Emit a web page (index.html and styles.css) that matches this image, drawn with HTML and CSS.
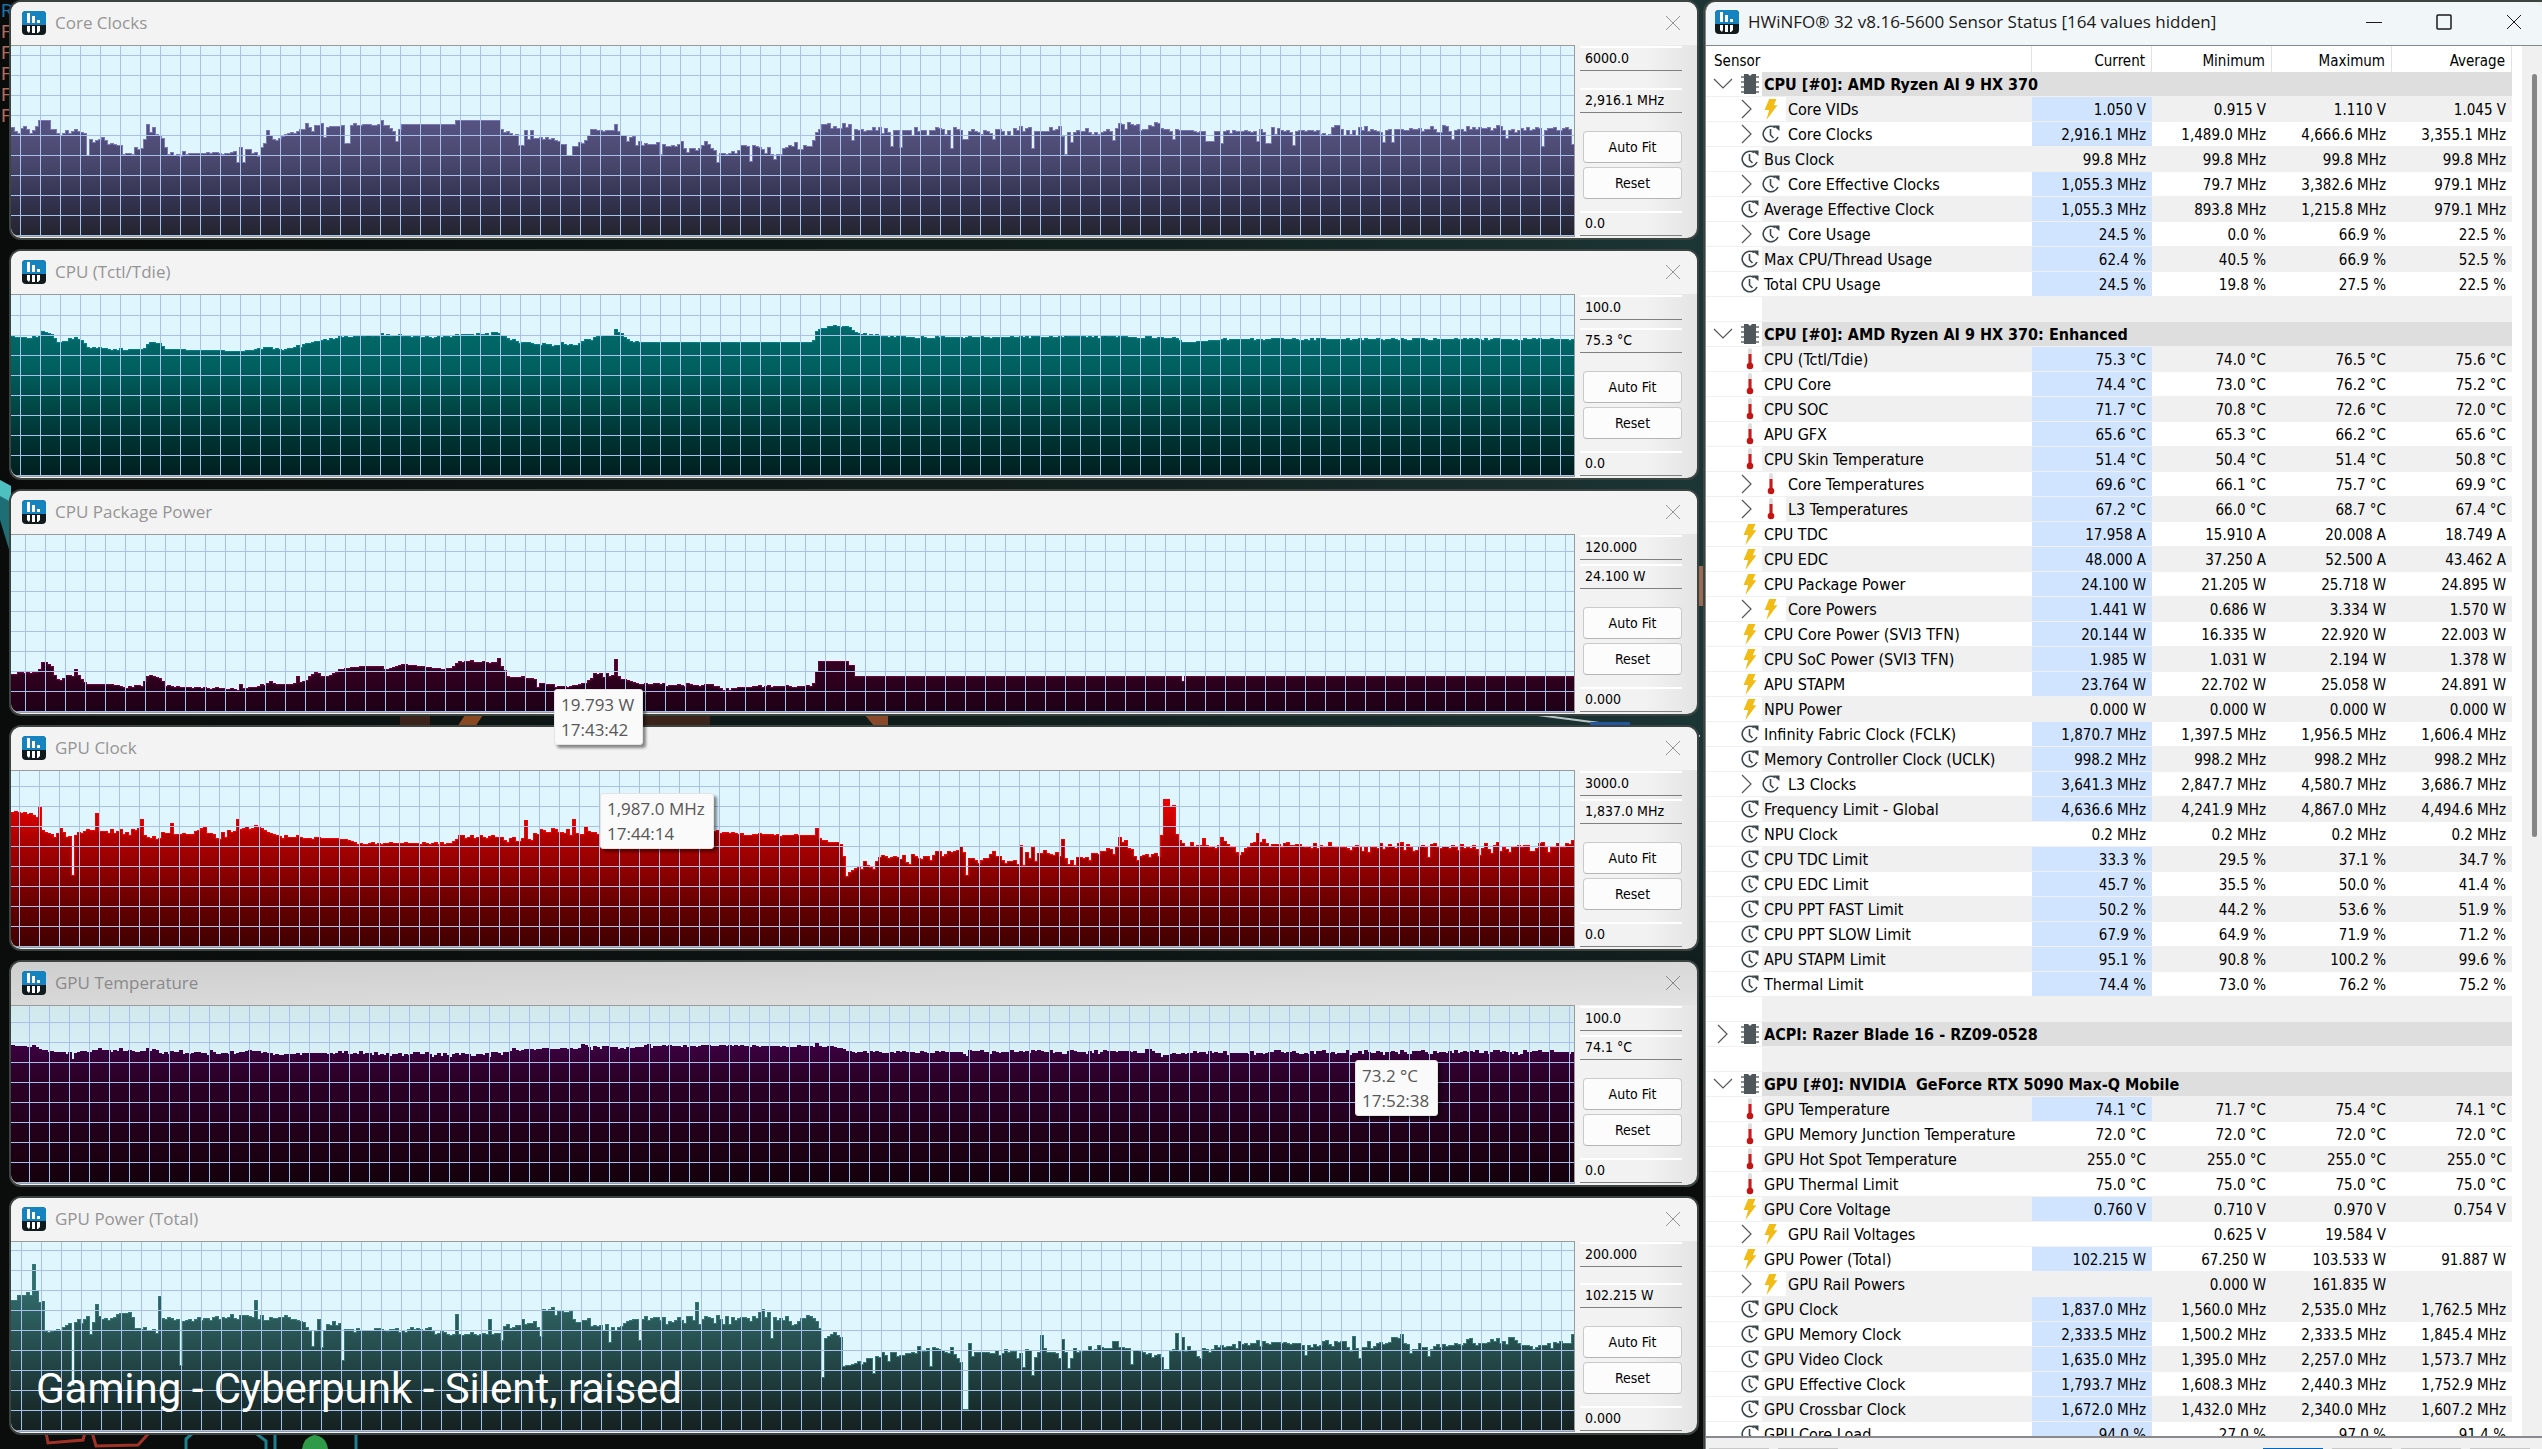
FILE: index.html
```
<!DOCTYPE html>
<html lang="en">
<head>
    <meta charset="UTF-8">
    <meta name="viewport" content="width=device-width, initial-scale=1.0">
    <title>HWiNFO Sensor Status</title>
    <link rel="stylesheet" href="styles.css">
</head>
<body>
    <!-- Shared icons -->
    <svg class="symbols" aria-hidden="true">
        <symbol id="logo" viewBox="0 0 24 24">
            <rect width="24" height="24" rx="4" fill="#10191c"/>
            <path d="M0 14V4a4 4 0 0 1 4-4h16a4 4 0 0 1 4 4v10z" fill="#1583c0"/>
            <path d="M5 2h3v10H5zM10 5h3v7h-3zM15 9h3v3h-3z" fill="#fff"/>
            <path d="M5 15h3v5l-1 2-2-2zM10 15h3v7h-3zM15 15h3v5l-2 2h-1z" fill="#fff"/>
        </symbol>
        <symbol id="cross" viewBox="0 0 16 16">
            <path d="M1 1l14 14M15 1L1 15" fill="none" stroke="currentColor"/>
        </symbol>
        <symbol id="minimize" viewBox="0 0 16 16">
            <path d="M0 8.5h16" stroke="currentColor"/>
        </symbol>
        <symbol id="maximize" viewBox="0 0 16 16">
            <rect x="1" y="1" width="14" height="14" rx="1" fill="none" stroke="currentColor" stroke-width="1.5"/>
        </symbol>
        <symbol id="open" viewBox="0 0 20 20">
            <path d="M1 5l9 9 9-9" fill="none" stroke="#555" stroke-width="1.2"/>
        </symbol>
        <symbol id="closed" viewBox="0 0 20 20">
            <path d="M5 1l9 9-9 9" fill="none" stroke="#555" stroke-width="1.2"/>
        </symbol>
        <symbol id="chip" viewBox="0 0 18 22">
            <path d="M0 4h18M0 9h18M0 14h18M0 19h18" stroke="#8a8f91" stroke-width="2"/>
            <path d="M3 1h4l2 2 2-2h4v20H3z" fill="#50575a"/>
        </symbol>
        <symbol id="bolt" viewBox="0 0 18 24">
            <path d="M7 1h8l-3 7h4L4 24l3-11H2z" fill="#f2bc16"/>
        </symbol>
        <symbol id="clock" viewBox="0 0 18 22">
            <path d="M13 4.500A7.700 7.700 0 1 0 16 14" fill="none" stroke="#3d484c" stroke-width="1.600"/>
            <path d="M11 2.500h6.500V8z" fill="#3d484c"/>
            <path d="M8.500 6v6l3 3" fill="none" stroke="#3d484c" stroke-width="1.600"/>
        </symbol>
        <symbol id="thermo" viewBox="0 0 10 22">
            <rect x="3" y="0" width="4" height="17" rx="2" fill="#dedede"/>
            <path d="M3.500 6h3v10h-3z" fill="#cc1a1a"/>
            <circle cx="5" cy="18" r="3.300" fill="#c51414"/>
        </symbol>
    </svg>

    <!-- Bits of the game that show around the windows -->
    <svg class="game" aria-hidden="true">
        <path d="M0 480l11 6v70L0 520z" fill="#1d6f75"/>
        <path d="M0 480l11 6v16L0 496z" fill="#4ec0c0"/>
        <path d="M1530 714l170 22" stroke="#b9c4c4" stroke-width="2"/>
        <path d="M465 715h18l-8 12h-18z" fill="#8a4820"/>
        <path d="M400 715h30v12h-30zM640 715h70v12h-70z" fill="#3c241c"/>
        <path d="M864 714h24v12h-14z" fill="#8a4a2a"/>
        <path d="M1590 722h40v4h-40z" fill="#2456a0"/>
        <path d="M1699 566h5v40h-5z" fill="#9a6a50"/>
        <path d="M46 1432l2 11 35-3 2-8M92 1432l4 14 42-1 12-13" fill="none" stroke="#a33226" stroke-width="3"/>
        <path d="M186 1449v-10l8-7M254 1432l12 9v8M275 1432v17M356 1432v17" fill="none" stroke="#1f7f8c" stroke-width="3"/>
        <path d="M302 1449q2-12 12-14 12 1 14 14z" fill="#2f9a48"/>
    </svg>
    <div class="log">
        <span class="log-head">R</span>
        <span>F</span>
        <span>F</span>
        <span>F</span>
        <span>F</span>
        <span>F</span>
    </div>

    <main class="desktop">
        <div class="graphs" id="graphs"></div>

        <section class="window sensors">
            <header class="titlebar">
                <svg class="logo"><use href="#logo"/></svg>
                <h1>HWiNFO® 32 v8.16-5600 Sensor Status [164 values hidden]</h1>
                <div class="caption-buttons">
                    <button aria-label="Minimize"><svg><use href="#minimize"/></svg></button>
                    <button aria-label="Maximize"><svg><use href="#maximize"/></svg></button>
                    <button aria-label="Close"><svg><use href="#cross"/></svg></button>
                </div>
            </header>
            <div class="sensor-body">
                <table>
                    <thead>
                        <tr>
                            <th class="name">Sensor</th>
                            <th>Current</th>
                            <th>Minimum</th>
                            <th>Maximum</th>
                            <th>Average</th>
                        </tr>
                    </thead>
                    <tbody id="rows"></tbody>
                </table>
                <div class="scrollbar"><div class="thumb"></div></div>
            </div>
            <footer class="toolbar">
                <span></span><span></span>
                <span class="primary"></span><span></span><span></span><span></span>
            </footer>
        </section>
    </main>

    <p class="caption">Gaming - Cyberpunk - Silent, raised</p>

    <script src="script.js"></script>
</body>
</html>
```
FILE: styles.css
```
* {
    box-sizing: border-box;
}

body {
    margin: 0;
    height: 100vh;
    overflow: hidden;
    position: relative;
    font-family: "DejaVu Sans Condensed", Tahoma, "Noto Sans", sans-serif;
    font-size: 15px;
    color: #000;
    background: linear-gradient(to bottom, transparent 55%, #0a0d0c 75%),
                linear-gradient(to right, #0a0c0b, #12211f 45%, #1d3838 70%, #173030);
}

h1, h2, p {
    margin: 0;
}

button {
    font: inherit;
    color: inherit;
    padding: 0;
}

.symbols {
    display: none;
}

.game {
    position: absolute;
    left: 0;
    top: 0;
    width: 100%;
    height: 100%;
}

.log {
    position: absolute;
    left: 1px;
    top: 0;
    display: flex;
    flex-direction: column;
    font-family: Roboto, sans-serif;
    font-size: 19px;
    line-height: 21px;
    color: #b26a5a;
}

.log-head {
    color: #1a72a8;
}

.desktop {
    position: relative;
    display: grid;
    grid-template-columns: 1686fr 837fr;
    gap: 8px;
    height: 100%;
    padding: 2px 0 0 11px;
}

.graphs {
    display: grid;
    grid-template-rows: 236fr 227fr 223fr 222fr 223fr 235fr;
    gap: 13px;
    padding-bottom: 16px;
    min-height: 0;
}

.window {
    position: relative;
    display: flex;
    flex-direction: column;
    min-width: 0;
    min-height: 0;
    background: #f0f0f0;
    border-radius: 10px;
    box-shadow: 0 0 0 2px #3c4442;
}

.titlebar {
    display: flex;
    align-items: center;
    gap: 9px;
    height: 43px;
    flex: none;
    padding: 0 16px 2px 11px;
    border-radius: 10px 10px 0 0;
    background: #f3f3f3;
    color: #959595;
}

.titlebar h1,
.titlebar h2 {
    flex: 1;
    font-family: "Open Sans", "Noto Sans", sans-serif;
    font-size: 17px;
    font-weight: normal;
    line-height: 24px;
}

.logo {
    width: 24px;
    height: 24px;
}

.titlebar button {
    width: 16px;
    height: 16px;
    border: 0;
    background: none;
}

.titlebar button svg {
    display: block;
    width: 16px;
    height: 16px;
}

/* Graph windows */
.graph {
    background: linear-gradient(to right, #f2f2f2 97%, #e4e4e4);
    padding-bottom: 1px;
}

.graph-gputemp .titlebar {
    background: linear-gradient(to bottom right, #cecece, #e2e2e2);
    color: #8a8a8a;
}

.graph-body {
    flex: 1;
    display: flex;
    gap: 5px;
    min-height: 0;
}

.plot {
    flex: 1;
    min-width: 0;
    border: 1px solid #9a9a9a;
    border-left: 0;
    border-radius: 0 0 0 9px;
    background: #dff6ff;
    overflow: hidden;
}

.graph-gputemp .plot {
    background: linear-gradient(to bottom, #d0e8ec, #dff6ff 50%);
}

.plot svg {
    display: block;
    width: 100%;
    height: 100%;
}

.controls {
    width: 117px;
    flex: none;
    display: flex;
    flex-direction: column;
    padding: 1px 15px 1px 0;
}

.readout {
    height: 25px;
    flex: none;
    padding-left: 5px;
    border-top: 2px solid #fff;
    border-bottom: 1px solid #808080;
    font-size: 14px;
    line-height: 20px;
    white-space: nowrap;
}

.readout.current {
    margin: auto 0 18px;
}

.controls button {
    height: 32px;
    flex: none;
    margin: 0 0 4px 3px;
    border: 1px solid #cacaca;
    border-bottom-color: #b5b5b5;
    border-radius: 4px;
    background: #fcfcfc;
    font-size: 14px;
}

.readout.low {
    margin-top: 8px;
}

.tip {
    position: absolute;
    z-index: 2;
    padding: 2px 8px 2px 6px;
    border: 1px solid #e4e4e4;
    border-radius: 3px;
    background: #fafafa;
    box-shadow: 3px 3px 3px rgba(0, 0, 0, .45);
    color: #575757;
    font-family: "Open Sans", "Noto Sans", sans-serif;
    font-size: 17px;
    line-height: 25px;
    white-space: nowrap;
}

.tip-power {
    left: 543px;
    top: 198px;
}

.tip-clock {
    left: 589px;
    top: 66px;
}

.tip-temp {
    left: 1344px;
    top: 98px;
}

/* Sensor window */
.sensors {
    border-radius: 10px 0 0 0;
    overflow: hidden;
    border-left: 1px solid #858585;
}

.sensors .titlebar {
    border-bottom: 1px solid #83888c;
    padding: 0 16px 3px 9px;
    height: 44px;
    color: #1a1a1a;
    background: #f1f6f8;
}

.caption-buttons {
    display: flex;
    gap: 54px;
    padding-right: 4px;
}

.sensor-body {
    flex: 1;
    display: flex;
    align-items: flex-start;
    min-height: 0;
    overflow: hidden;
    background: #fff;
}

table {
    flex: 1;
    table-layout: fixed;
    border-collapse: separate;
    border-spacing: 0;
    margin-right: 10px;
}

th {
    width: 120px;
    height: 26px;
    padding: 3px 6px 0 0;
    border-right: 1px solid #e2e2e2;
    font-weight: normal;
    line-height: 20px;
    text-align: right;
}

th.name {
    width: auto;
    padding-left: 8px;
    text-align: left;
}

td {
    height: 25px;
    padding: 2px 6px 0 0;
    border-bottom: 1px solid #f0f0f0;
    line-height: 20px;
    text-align: right;
    white-space: pre;
}

.name-cell {
    padding: 0;
    background: #fff;
    font-size: 16px;
    text-align: left;
}

.tree {
    display: flex;
    align-items: center;
    height: 24px;
}

.gutter {
    width: 35px;
    flex: none;
    padding-left: 6px;
}

.icon,
.twisty {
    display: flex;
    align-items: center;
    justify-content: center;
    width: 21px;
    height: 24px;
    flex: none;
    border: 0;
    background: none;
}

.icon {
    justify-content: flex-start;
}

/* Expandable rows: arrow hangs into the gutter */
.child .gutter {
    width: 31px;
}

.child .twisty {
    width: 25px;
    justify-content: flex-start;
}

.child .icon {
    width: 24px;
}

.icon svg {
    width: 18px;
    height: 22px;
}

.twisty svg {
    width: 20px;
    height: 20px;
}

.label {
    flex: 1;
    height: 24px;
    line-height: 26px;
    padding-left: 2px;
    min-width: 0;
}

.alt td:not(.name-cell),
.alt .label {
    background: #f0f0f0;
}

.row td.live {
    background: #d0e4ff;
}

.group td:not(.name-cell),
.group .label {
    background: #dedede;
    font-weight: bold;
}

.scrollbar {
    width: 20px;
    height: 100%;
    padding: 28px 5px 0 10px;
    background: #f0f0f0;
}

.thumb {
    height: 56%;
    border-radius: 3px;
    background: #868686;
}

.toolbar {
    height: 13px;
    flex: none;
    display: flex;
    gap: 9px;
    padding: 10px 12px 0 3px;
    border-top: 2px solid #8a8a8e;
    background: #f0f0f0;
}

.toolbar span {
    width: 60px;
    background: #c8c8c8;
}

.toolbar .primary {
    margin-left: auto;
    background: #0067c0;
}

.caption {
    position: absolute;
    left: 36px;
    bottom: 24px;
    font-family: Roboto, "Liberation Sans", sans-serif;
    font-size: 42px;
    line-height: 72px;
    color: #fff;
}
```
FILE: script.js
```
// Each graph: levels are [x, height, noise] joined by straight runs,
// spikes are [x, width, height] drawn over them. Heights are measured from the bottom.
const graphs = [
    {
        id: 'coreclk', title: 'Core Clocks', max: '6000.0', now: '2,916.1 MHz', min: '0.0', phase: 9,
        stroke: '#7a78ba', stops: ['#23232e', '#343350', '#48466c', '#555280', '#56538a'],
        levels: [
            [0, 108, 4], [26, 108, 4], [27, 116, 0], [37, 116, 0], [40, 103, 3], [60, 103, 4], [63, 109, 2], [73, 101, 2],
            [79, 93, 1], [90, 100, 2], [96, 93, 1], [108, 91, 1], [110, 83, 1], [120, 83, 3], [130, 92, 5],
            [134, 109, 1], [140, 103, 5], [149, 101, 1], [155, 82, 2], [224, 84, 9], [248, 84, 8], [254, 106, 2],
            [262, 94, 1], [273, 102, 3], [287, 105, 1], [293, 109, 3], [317, 110, 1], [350, 112, 1], [374, 112, 0],
            [384, 102, 1], [390, 112, 0], [442, 112, 0], [444, 116, 0], [486, 116, 1], [490, 103, 3], [510, 101, 5],
            [537, 98, 6], [550, 94, 3], [562, 91, 3], [572, 96, 3], [582, 106, 2], [608, 106, 5], [619, 98, 4],
            [632, 92, 2], [670, 92, 1], [674, 84, 3], [693, 95, 1], [706, 82, 1], [724, 84, 3], [728, 91, 3],
            [746, 91, 2], [750, 83, 6], [768, 82, 2], [770, 91, 3], [800, 90, 3], [805, 111, 3], [838, 113, 4],
            [842, 106, 4], [1100, 105, 5], [1110, 111, 4], [1146, 110, 2], [1160, 106, 2], [1250, 105, 3],
            [1290, 106, 4], [1400, 107, 3], [1563, 108, 3]
        ],
        spikes: [
            [74, 4, 81], [134, 4, 112], [224, 3, 74], [230, 3, 74], [312, 3, 99], [334, 6, 93], [369, 2, 116],
            [383, 3, 95], [506, 5, 91], [554, 6, 81], [603, 2, 112], [648, 3, 82], [706, 3, 74], [738, 3, 75],
            [762, 3, 77], [841, 3, 96], [880, 4, 90], [888, 3, 89], [940, 4, 88], [951, 5, 97], [980, 4, 97],
            [1020, 3, 88], [1053, 4, 82], [1060, 3, 94], [1102, 4, 96], [1160, 4, 97], [1193, 8, 95],
            [1208, 3, 93], [1245, 3, 95], [1254, 5, 93], [1281, 3, 91], [1371, 3, 94], [1380, 3, 94],
            [1441, 3, 97], [1495, 3, 98], [1530, 4, 90], [1560, 3, 92]
        ]
    },
    {
        id: 'cputemp', title: 'CPU (Tctl/Tdie)', max: '100.0', now: '75.3 °C', min: '0.0', phase: 9,
        stroke: '#00808a', stops: ['#001e1e', '#003232', '#004a48', '#006060', '#006868'],
        levels: [
            [0, 139, 1], [26, 139, 0], [29, 145, 0], [38, 143, 1], [46, 133, 1], [63, 139, 2], [70, 134, 1], [76, 129, 1],
            [114, 126, 1], [134, 128, 1], [136, 134, 0], [148, 133, 1], [153, 127, 0], [229, 125, 1], [257, 129, 1],
            [273, 127, 1], [309, 136, 1], [331, 139, 1], [350, 140, 1], [388, 141, 1], [400, 139, 1], [427, 139, 1],
            [454, 142, 1], [487, 143, 1], [498, 136, 1], [531, 131, 2], [564, 132, 1], [586, 140, 1], [600, 141, 1],
            [602, 146, 1], [608, 145, 1], [616, 136, 1], [628, 134, 0], [800, 134, 1], [805, 147, 1], [822, 151, 1],
            [833, 150, 1], [847, 142, 1], [899, 139, 1], [1020, 139, 1], [1097, 140, 1], [1165, 138, 1],
            [1169, 134, 0], [1196, 135, 1], [1212, 137, 1], [1563, 137, 1]
        ],
        spikes: [[604, 4, 147], [369, 2, 143], [1053, 3, 141]]
    },
    {
        id: 'cpupower', title: 'CPU Package Power', max: '120.000', now: '24.100 W', min: '0.000', phase: 14,
        stroke: '#6c0040', stops: ['#1e0016', '#30001e', '#40002a', '#50002e', '#600030'],
        tip: ['tip-power', '19.793 W', '17:43:42'],
        levels: [
            [0, 39, 1], [26, 39, 0], [29, 51, 1], [38, 49, 1], [42, 38, 1], [46, 30, 0], [54, 37, 1], [68, 36, 2],
            [73, 28, 0], [100, 28, 1], [114, 24, 1], [130, 28, 1], [136, 38, 0], [148, 34, 0], [153, 26, 1],
            [224, 23, 1], [250, 27, 1], [257, 31, 1], [273, 27, 1], [292, 31, 3], [303, 40, 1], [314, 35, 1],
            [331, 44, 0], [353, 46, 0], [370, 46, 1], [373, 42, 0], [391, 48, 0], [432, 43, 1], [442, 46, 0],
            [446, 51, 1], [487, 50, 1], [495, 35, 1], [518, 34, 4], [526, 29, 1], [556, 25, 1], [575, 30, 1],
            [582, 37, 2], [606, 36, 3], [616, 31, 1], [626, 28, 1], [701, 27, 1], [710, 23, 1], [740, 26, 1],
            [800, 26, 1], [805, 44, 0], [806, 51, 0], [835, 51, 0], [836, 47, 0], [842, 47, 0], [843, 36, 0], [1563, 36, 1]
        ],
        spikes: [[63, 2, 43], [602, 3, 53], [228, 2, 28], [284, 2, 36], [487, 2, 54], [1169, 4, 31]]
    },
    {
        id: 'gpuclk', title: 'GPU Clock', max: '3000.0', now: '1,837.0 MHz', min: '0.0', phase: 8,
        stroke: '#f80000', stops: ['#400000', '#600000', '#8a0000', '#b00000', '#e80000'],
        tip: ['tip-clock', '1,987.0 MHz', '17:44:14'],
        levels: [
            [0, 135, 2], [26, 131, 3], [29, 117, 1], [43, 110, 2], [47, 120, 1], [55, 109, 2], [65, 110, 3],
            [70, 118, 3], [98, 115, 4], [128, 118, 4], [134, 110, 2], [146, 108, 1], [150, 114, 1], [180, 113, 2],
            [188, 118, 3], [207, 110, 4], [230, 119, 3], [246, 119, 1], [262, 112, 2], [295, 109, 1], [328, 109, 2],
            [345, 104, 1], [440, 104, 1], [446, 110, 2], [470, 110, 3], [493, 107, 3], [513, 106, 3], [528, 118, 3],
            [561, 113, 5], [578, 115, 4], [589, 111, 1], [705, 116, 2], [730, 113, 1], [800, 112, 1], [811, 107, 2],
            [828, 104, 1], [831, 90, 1], [834, 73, 2], [842, 79, 4], [861, 82, 4], [868, 92, 3], [890, 87, 4],
            [920, 92, 4], [949, 96, 4], [965, 87, 3], [982, 94, 3], [990, 83, 3], [1005, 88, 6], [1035, 94, 4],
            [1060, 87, 5], [1080, 94, 3], [1104, 97, 3], [1112, 106, 4], [1121, 90, 3], [1148, 94, 3],
            [1151, 148, 1], [1154, 139, 1], [1161, 142, 1], [1164, 112, 1], [1172, 101, 3], [1215, 103, 5],
            [1230, 96, 3], [1244, 107, 3], [1260, 103, 3], [1350, 100, 4], [1563, 100, 3]
        ],
        spikes: [
            [26, 2, 140], [59, 4, 72], [84, 3, 134], [128, 2, 128], [158, 2, 124], [225, 2, 128], [513, 3, 127],
            [561, 2, 128], [803, 3, 119], [953, 4, 72], [1007, 3, 102], [1010, 3, 82], [1020, 2, 100],
            [1049, 3, 108], [1055, 3, 83], [1106, 2, 110], [1151, 5, 148], [1190, 3, 109], [1208, 3, 110],
            [1245, 3, 114], [1415, 4, 90], [1467, 3, 92], [1560, 3, 107]
        ]
    },
    {
        id: 'gputemp', title: 'GPU Temperature', max: '100.0', now: '74.1 °C', min: '0.0', phase: 18,
        stroke: '#3c0048', stops: ['#14000c', '#1e0014', '#260020', '#2c0028', '#400048'],
        tip: ['tip-temp', '73.2 °C', '17:52:38'],
        levels: [
            [0, 137, 1], [22, 137, 1], [32, 132, 1], [60, 130, 1], [87, 133, 2], [207, 130, 2], [240, 132, 1],
            [262, 129, 1], [320, 130, 2], [372, 128, 2], [482, 129, 2], [504, 133, 1], [570, 135, 2], [646, 137, 1],
            [800, 137, 1], [829, 136, 2], [834, 131, 1], [950, 131, 2], [1040, 131, 2], [1140, 132, 1],
            [1150, 128, 1], [1180, 130, 2], [1563, 131, 2]
        ],
        spikes: [[59, 3, 124], [953, 4, 127], [1149, 3, 126], [570, 2, 139], [805, 2, 140]]
    },
    {
        id: 'gpupower', title: 'GPU Power (Total)', max: '200.000', now: '102.215 W', min: '0.000', phase: 10,
        stroke: '#357878', stops: ['#14201f', '#1c3434', '#244848', '#2b5a5a', '#326c6c'],
        levels: [
            [0, 133, 2], [18, 137, 2], [24, 138, 3], [27, 130, 1], [31, 131, 1], [33, 100, 1], [46, 102, 3],
            [57, 108, 2], [65, 109, 4], [76, 114, 3], [82, 108, 3], [86, 116, 3], [98, 112, 1], [111, 119, 2],
            [120, 115, 1], [122, 102, 1], [134, 104, 4], [142, 97, 2], [150, 111, 3], [175, 112, 3], [207, 113, 4],
            [235, 117, 3], [251, 112, 1], [267, 115, 2], [290, 110, 3], [297, 100, 2], [310, 100, 3],
            [320, 109, 3], [335, 101, 2], [380, 102, 3], [427, 101, 3], [436, 97, 2], [465, 97, 1], [487, 98, 4],
            [504, 106, 4], [524, 108, 5], [532, 121, 3], [558, 119, 3], [562, 108, 2], [576, 112, 2],
            [580, 103, 3], [604, 103, 3], [613, 109, 1], [627, 113, 3], [640, 111, 3], [701, 111, 4],
            [745, 115, 4], [767, 113, 3], [783, 109, 3], [799, 116, 2], [805, 108, 2], [811, 92, 1],
            [820, 98, 2], [828, 95, 1], [831, 65, 1], [845, 68, 2], [861, 71, 4], [870, 79, 6], [885, 74, 3],
            [906, 82, 4], [939, 80, 6], [947, 70, 3], [963, 77, 2], [1003, 80, 5], [1020, 79, 4],
            [1060, 78, 4], [1104, 85, 4], [1135, 78, 5], [1150, 75, 4], [1165, 84, 4], [1186, 78, 3], [1215, 86, 4],
            [1255, 90, 2], [1290, 86, 3], [1325, 88, 4], [1345, 83, 4], [1382, 90, 4], [1410, 84, 4],
            [1440, 86, 4], [1496, 90, 4], [1518, 85, 3], [1563, 89, 4]
        ],
        spikes: [
            [20, 3, 167], [59, 4, 46], [78, 3, 97], [84, 2, 127], [147, 3, 135], [167, 4, 66], [243, 3, 131],
            [300, 3, 85], [305, 2, 112], [310, 3, 84], [331, 3, 71], [444, 2, 117], [478, 2, 112], [490, 3, 91],
            [527, 4, 95], [597, 3, 89], [627, 4, 91], [685, 2, 129], [750, 2, 122], [758, 3, 93], [809, 4, 54],
            [860, 4, 58], [918, 3, 65], [952, 5, 22], [957, 2, 88], [1011, 3, 64], [1020, 3, 56], [1029, 3, 96],
            [1050, 2, 92], [1055, 4, 63], [1119, 3, 67], [1153, 7, 62], [1163, 3, 98], [1170, 2, 94],
            [1188, 3, 73], [1293, 3, 76], [1340, 2, 95], [1347, 3, 73], [1389, 3, 97], [1398, 2, 78],
            [1416, 3, 75], [1560, 3, 97]
        ]
    }
];

// Small repeatable generator, so that a graph looks the same on each redraw
function makeRandom(seed) {
    return function () {
        seed = (seed * 16807) % 2147483647;
        return seed / 2147483647;
    };
}

const SAMPLE = 3;
const SPAN = 1563;

function sampleHeights(graph) {
    const random = makeRandom(graph.title.length * 7919);
    const heights = new Array(SPAN / SAMPLE);
    let seg = 0;
    for (let i = 0; i < heights.length; i++) {
        const x = i * SAMPLE;
        while (seg < graph.levels.length - 2 && graph.levels[seg + 1][0] <= x) seg++;
        const [x0, h0, noise] = graph.levels[seg];
        const [x1, h1] = graph.levels[seg + 1];
        const base = h0 + (h1 - h0) * Math.min(1, (x - x0) / (x1 - x0));
        const r = random() * 2 - 1;
        heights[i] = Math.round(base + noise * r * Math.abs(r) * 1.4);
    }
    graph.spikes.forEach(([x, width, h]) => {
        const first = Math.round(x / SAMPLE);
        const count = Math.max(1, Math.round(width / SAMPLE));
        for (let i = first; i < first + count && i < heights.length; i++) heights[i] = h;
    });
    return heights;
}

function drawGraph(graph) {
    const svg = document.getElementById('plot-' + graph.id);
    const width = svg.clientWidth;
    const height = svg.clientHeight;
    const step = width / (SPAN / SAMPLE);
    let line = '';
    sampleHeights(graph).forEach((h, i) => {
        line += `${i ? 'V' : 'M0 '}${height - h}H${(i + 1) * step}`;
    });

    let grid = '';
    for (let x = graph.phase; x < width; x += 20) grid += `M${x + 0.5} 0V${height}`;
    for (let y = height - 1; y > 0; y -= 20) grid += `M0 ${y + 0.5}H${width}`;

    const stops = graph.stops.map((color, i) =>
        `<stop offset="${i * 25}%" stop-color="${color}"/>`).join('');

    svg.innerHTML = `
        <linearGradient id="fill-${graph.id}" gradientUnits="userSpaceOnUse" x1="0" y1="${height}" x2="0" y2="${height - 145}">${stops}</linearGradient>
        <path d="${line}V${height}H0z" fill="url(#fill-${graph.id})"/>
        <path d="${line}" fill="none" stroke="${graph.stroke}"/>
        <path d="${grid}" fill="none" stroke="#a7c1ea"/>`;
}

document.getElementById('graphs').innerHTML = graphs.map(g => `
    <section class="window graph graph-${g.id}">
        <header class="titlebar">
            <svg class="logo"><use href="#logo"/></svg>
            <h2>${g.title}</h2>
            <button aria-label="Close"><svg><use href="#cross"/></svg></button>
        </header>
        <div class="graph-body">
            <div class="plot"><svg id="plot-${g.id}" shape-rendering="crispEdges"></svg></div>
            <div class="controls">
                <div class="readout">${g.max}</div>
                <div class="readout current">${g.now}</div>
                <button>Auto Fit</button>
                <button>Reset</button>
                <div class="readout low">${g.min}</div>
            </div>
        </div>
        ${g.tip ? `<div class="tip ${g.tip[0]}">${g.tip[1]}<br>${g.tip[2]}</div>` : ''}
    </section>`).join('');

function drawAll() {
    graphs.forEach(drawGraph);
}
drawAll();
window.addEventListener('resize', drawAll);

// Sensor rows: icon | name | current | minimum | maximum | average
// '+' before the name marks a row that expands, '~' one whose value has not changed
const groups = [
    { name: 'CPU [#0]: AMD Ryzen AI 9 HX 370', open: true, rows: `
bolt|+Core VIDs|1.050 V|0.915 V|1.110 V|1.045 V
clock|+Core Clocks|2,916.1 MHz|1,489.0 MHz|4,666.6 MHz|3,355.1 MHz
clock|~Bus Clock|99.8 MHz|99.8 MHz|99.8 MHz|99.8 MHz
clock|+Core Effective Clocks|1,055.3 MHz|79.7 MHz|3,382.6 MHz|979.1 MHz
clock|Average Effective Clock|1,055.3 MHz|893.8 MHz|1,215.8 MHz|979.1 MHz
clock|+Core Usage|24.5 %|0.0 %|66.9 %|22.5 %
clock|Max CPU/Thread Usage|62.4 %|40.5 %|66.9 %|52.5 %
clock|Total CPU Usage|24.5 %|19.8 %|27.5 %|22.5 %` },
    { name: 'CPU [#0]: AMD Ryzen AI 9 HX 370: Enhanced', open: true, rows: `
thermo|CPU (Tctl/Tdie)|75.3 °C|74.0 °C|76.5 °C|75.6 °C
thermo|CPU Core|74.4 °C|73.0 °C|76.2 °C|75.2 °C
thermo|CPU SOC|71.7 °C|70.8 °C|72.6 °C|72.0 °C
thermo|APU GFX|65.6 °C|65.3 °C|66.2 °C|65.6 °C
thermo|CPU Skin Temperature|51.4 °C|50.4 °C|51.4 °C|50.8 °C
thermo|+Core Temperatures|69.6 °C|66.1 °C|75.7 °C|69.9 °C
thermo|+L3 Temperatures|67.2 °C|66.0 °C|68.7 °C|67.4 °C
bolt|CPU TDC|17.958 A|15.910 A|20.008 A|18.749 A
bolt|CPU EDC|48.000 A|37.250 A|52.500 A|43.462 A
bolt|CPU Package Power|24.100 W|21.205 W|25.718 W|24.895 W
bolt|+Core Powers|1.441 W|0.686 W|3.334 W|1.570 W
bolt|CPU Core Power (SVI3 TFN)|20.144 W|16.335 W|22.920 W|22.003 W
bolt|CPU SoC Power (SVI3 TFN)|1.985 W|1.031 W|2.194 W|1.378 W
bolt|APU STAPM|23.764 W|22.702 W|25.058 W|24.891 W
bolt|~NPU Power|0.000 W|0.000 W|0.000 W|0.000 W
clock|Infinity Fabric Clock (FCLK)|1,870.7 MHz|1,397.5 MHz|1,956.5 MHz|1,606.4 MHz
clock|Memory Controller Clock (UCLK)|998.2 MHz|998.2 MHz|998.2 MHz|998.2 MHz
clock|+L3 Clocks|3,641.3 MHz|2,847.7 MHz|4,580.7 MHz|3,686.7 MHz
clock|Frequency Limit - Global|4,636.6 MHz|4,241.9 MHz|4,867.0 MHz|4,494.6 MHz
clock|~NPU Clock|0.2 MHz|0.2 MHz|0.2 MHz|0.2 MHz
clock|CPU TDC Limit|33.3 %|29.5 %|37.1 %|34.7 %
clock|CPU EDC Limit|45.7 %|35.5 %|50.0 %|41.4 %
clock|CPU PPT FAST Limit|50.2 %|44.2 %|53.6 %|51.9 %
clock|CPU PPT SLOW Limit|67.9 %|64.9 %|71.9 %|71.2 %
clock|APU STAPM Limit|95.1 %|90.8 %|100.2 %|99.6 %
clock|Thermal Limit|74.4 %|73.0 %|76.2 %|75.2 %` },
    { name: 'ACPI: Razer Blade 16 - RZ09-0528', open: false, rows: '' },
    { name: 'GPU [#0]: NVIDIA  GeForce RTX 5090 Max-Q Mobile', open: true, rows: `
thermo|GPU Temperature|74.1 °C|71.7 °C|75.4 °C|74.1 °C
thermo|~GPU Memory Junction Temperature|72.0 °C|72.0 °C|72.0 °C|72.0 °C
thermo|~GPU Hot Spot Temperature|255.0 °C|255.0 °C|255.0 °C|255.0 °C
thermo|~GPU Thermal Limit|75.0 °C|75.0 °C|75.0 °C|75.0 °C
bolt|GPU Core Voltage|0.760 V|0.710 V|0.970 V|0.754 V
bolt|+GPU Rail Voltages||0.625 V|19.584 V|
bolt|GPU Power (Total)|102.215 W|67.250 W|103.533 W|91.887 W
bolt|+GPU Rail Powers||0.000 W|161.835 W|
clock|GPU Clock|1,837.0 MHz|1,560.0 MHz|2,535.0 MHz|1,762.5 MHz
clock|GPU Memory Clock|2,333.5 MHz|1,500.2 MHz|2,333.5 MHz|1,845.4 MHz
clock|GPU Video Clock|1,635.0 MHz|1,395.0 MHz|2,257.0 MHz|1,573.7 MHz
clock|GPU Effective Clock|1,793.7 MHz|1,608.3 MHz|2,440.3 MHz|1,752.9 MHz
clock|GPU Crossbar Clock|1,672.0 MHz|1,432.0 MHz|2,340.0 MHz|1,607.2 MHz
clock|GPU Core Load|94.0 %|27.0 %|97.0 %|91.4 %` }
];

function icon(name) {
    return `<svg><use href="#${name}"/></svg>`;
}

function twisty(name, open) {
    return `<button class="twisty" aria-label="Toggle ${name}">${icon(open ? 'open' : 'closed')}</button>`;
}

function sensorRow(text, index) {
    let [kind, name, ...values] = text.split('|');
    const expands = name[0] === '+';
    const live = name[0] !== '~' && values[0] !== '';
    name = name.replace(/^[+~]/, '');
    let shaded = index % 2 === 0;
    if (name === 'GPU Power (Total)' || name === 'GPU Rail Powers') shaded = !shaded;
    return `<tr class="row ${shaded ? 'alt' : ''}">
        <td class="name-cell"><div class="tree ${expands ? 'child' : ''}"><span class="gutter"></span>${expands ? twisty(name, false) : ''}<span class="icon">${icon(kind)}</span><span class="label">${name}</span></div></td>
        ${values.map((v, i) => `<td${i === 0 && live ? ' class="live"' : ''}>${v}</td>`).join('')}
    </tr>`;
}

const blankRow = `<tr class="alt">
    <td class="name-cell"><div class="tree"><span class="gutter"></span><span class="icon"></span><span class="label"></span></div></td>
    <td></td><td></td><td></td><td></td></tr>`;

document.getElementById('rows').innerHTML = groups.map(group => `<tr class="group">
        <td class="name-cell" colspan="5"><div class="tree"><span class="gutter">${twisty(group.name, group.open)}</span><span class="icon">${icon('chip')}</span><span class="label">${group.name}</span></div></td>
    </tr>` + group.rows.trim().split('\n').filter(Boolean).map(sensorRow).join('')).join(blankRow);
```
